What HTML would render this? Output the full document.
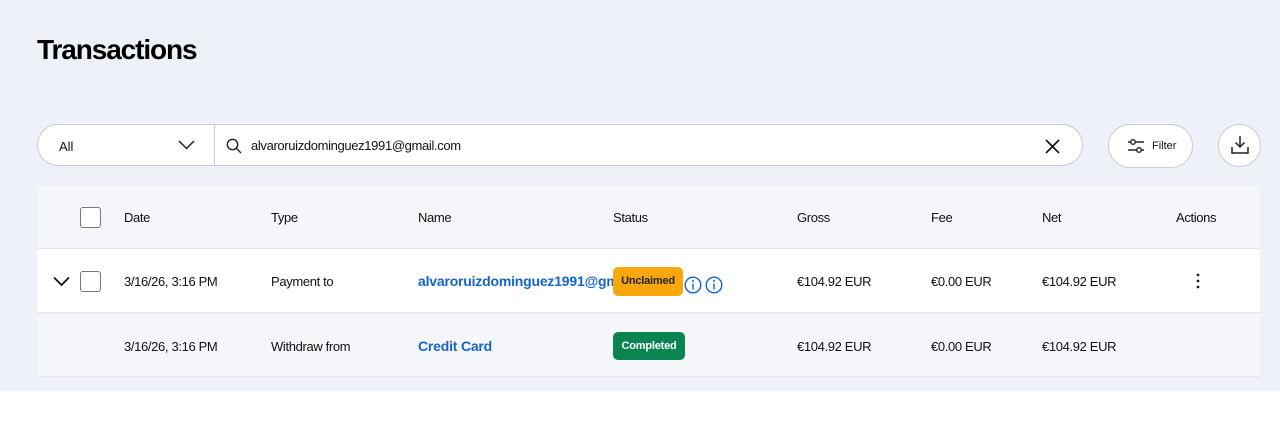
<!DOCTYPE html>
<html><head><meta charset="utf-8"><style>
*{box-sizing:border-box;margin:0;padding:0}
body{width:1280px;height:447px;background:#fff;font-family:"Liberation Sans",sans-serif;color:#111;position:relative;overflow:hidden}
.bg{position:absolute;left:0;top:0;width:1280px;height:391px;background:#eff1f8}
.t{position:absolute;left:37px;top:34px;font-size:28px;font-weight:bold;letter-spacing:-1.1px;color:#000}
.sel{position:absolute;left:37px;top:124px;width:178px;height:42px;border:1px solid #c9ccd3;border-right:none;border-radius:21px 0 0 21px;background:#fff}
.search{position:absolute;left:214px;top:124px;width:869px;height:42px;border:1px solid #c9ccd3;border-radius:0 21px 21px 0;background:#fff}
.abs{position:absolute}
.btn{position:absolute;border:1px solid #c9ccd3;background:#fff;border-radius:22px}
.row{position:absolute;left:37px;width:1223px}
.cell{position:absolute;font-size:13px;letter-spacing:-0.35px}
.cb{position:absolute;left:80px;width:21px;height:21px;border:1px solid #777;border-radius:3px;background:#fff}
.link{color:#1464c8;font-weight:bold;font-size:14px;letter-spacing:-0.2px}
.badge{position:absolute;border-radius:5px;font-size:11px;font-weight:bold;text-align:center;letter-spacing:-0.2px}
</style></head><body>
<div class="bg"></div>
<div class="t">Transactions</div>
<div class="sel"><span class="abs" style="left:21px;top:14px;font-size:13px">All</span>
<svg class="abs" style="left:140px;top:14px" width="17" height="12" viewBox="0 0 17 12"><path d="M1 2l7.5 7.5L16 2" fill="none" stroke="#222" stroke-width="1.5"/></svg></div>
<div class="search">
<svg class="abs" style="left:11px;top:13px" width="16" height="16" viewBox="0 0 16 16"><circle cx="6.5" cy="6.5" r="5.2" fill="none" stroke="#222" stroke-width="1.4"/><path d="M10.4 10.4L15 15" stroke="#222" stroke-width="1.4"/></svg>
<span class="abs" style="left:36px;top:13px;font-size:13px;color:#111;letter-spacing:-0.35px">alvaroruizdominguez1991@gmail.com</span>
<svg class="abs" style="left:830px;top:14px" width="15" height="15" viewBox="0 0 15 15"><path d="M1 1l13 13M14 1L1 14" stroke="#111" stroke-width="1.6"/></svg></div>
<div class="btn" style="left:1108px;top:124px;width:85px;height:44px">
<svg class="abs" style="left:18px;top:13px" width="18" height="16" viewBox="0 0 18 16"><path d="M1 4h16M1 12h16" stroke="#222" stroke-width="1.4"/><circle cx="6" cy="4" r="2.3" fill="#fff" stroke="#222" stroke-width="1.4"/><circle cx="12" cy="12" r="2.3" fill="#fff" stroke="#222" stroke-width="1.4"/></svg>
<span class="abs" style="left:43px;top:15px;font-size:11px">Filter</span></div>
<div class="btn" style="left:1218px;top:124px;width:43px;height:43px">
<svg class="abs" style="left:11px;top:10px" width="20" height="20" viewBox="0 0 20 20"><path d="M10 1v11M5.5 7.5L10 12l4.5-4.5M2 12v6h16v-6" fill="none" stroke="#222" stroke-width="1.5"/></svg></div>

<div class="row" style="top:186px;height:63px;background:#f5f6fa;border-bottom:1px solid #e3e5ea"></div>
<div class="row" style="top:249px;height:64px;background:#fff;border-bottom:1px solid #e3e5ea"></div>
<div class="row" style="top:313px;height:64px;background:#f5f6fa;border-bottom:1px solid #e3e5ea"></div>

<div class="cb" style="top:207px"></div>
<div class="cell" style="left:124px;top:210px">Date</div>
<div class="cell" style="left:271px;top:210px">Type</div>
<div class="cell" style="left:418px;top:210px">Name</div>
<div class="cell" style="left:613px;top:210px">Status</div>
<div class="cell" style="left:797px;top:210px">Gross</div>
<div class="cell" style="left:931px;top:210px">Fee</div>
<div class="cell" style="left:1042px;top:210px">Net</div>
<div class="cell" style="left:1176px;top:210px">Actions</div>

<svg class="abs" style="left:53px;top:276px" width="17" height="11" viewBox="0 0 17 11"><path d="M1 1.5l7.5 7.5L16 1.5" fill="none" stroke="#111" stroke-width="1.8"/></svg>
<div class="cb" style="top:271px"></div>
<div class="cell" style="left:124px;top:274px">3/16/26, 3:16 PM</div>
<div class="cell" style="left:271px;top:274px">Payment to</div>
<div class="cell link" style="left:418px;top:273px;width:196px;overflow:hidden;white-space:nowrap">alvaroruizdominguez1991@gmail.com</div>
<div class="badge" style="left:613px;top:267px;width:70px;height:29px;line-height:29px;background:#f8a70d;color:#222">Unclaimed</div>
<svg class="abs" style="left:684px;top:275px" width="42" height="20" viewBox="0 0 42 20"><circle cx="9" cy="10" r="7.8" fill="none" stroke="#1464c8" stroke-width="1.4"/><circle cx="9" cy="6" r="1" fill="#1464c8"/><path d="M9 8.5v6" stroke="#1464c8" stroke-width="1.4"/><circle cx="30" cy="10" r="7.8" fill="none" stroke="#1464c8" stroke-width="1.4"/><circle cx="30" cy="6" r="1" fill="#1464c8"/><path d="M30 8.5v6" stroke="#1464c8" stroke-width="1.4"/></svg>
<div class="cell" style="left:797px;top:274px">€104.92 EUR</div>
<div class="cell" style="left:931px;top:274px">€0.00 EUR</div>
<div class="cell" style="left:1042px;top:274px">€104.92 EUR</div>
<svg class="abs" style="left:1195px;top:272px" width="6" height="18" viewBox="0 0 6 18"><circle cx="3" cy="3" r="1.4" fill="#222"/><circle cx="3" cy="9" r="1.4" fill="#222"/><circle cx="3" cy="15" r="1.4" fill="#222"/></svg>

<div class="cell" style="left:124px;top:339px">3/16/26, 3:16 PM</div>
<div class="cell" style="left:271px;top:339px">Withdraw from</div>
<div class="cell link" style="left:418px;top:338px">Credit Card</div>
<div class="badge" style="left:613px;top:332px;width:72px;height:28px;line-height:28px;background:#0a8451;color:#fff">Completed</div>
<div class="cell" style="left:797px;top:339px">€104.92 EUR</div>
<div class="cell" style="left:931px;top:339px">€0.00 EUR</div>
<div class="cell" style="left:1042px;top:339px">€104.92 EUR</div>
</body></html>
